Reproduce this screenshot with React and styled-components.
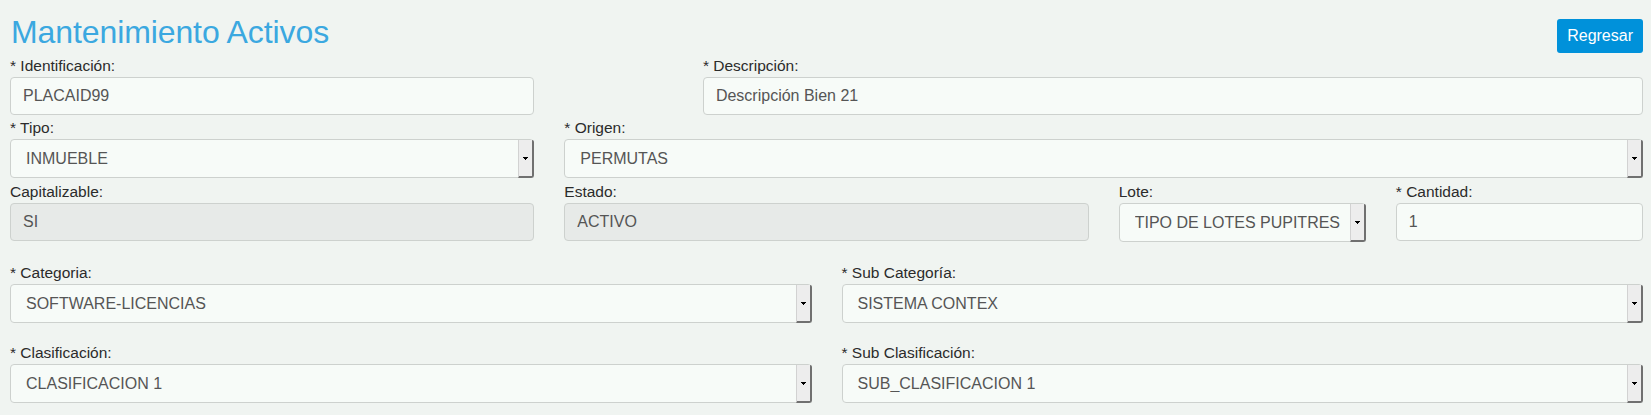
import React from 'react';
import styled, { createGlobalStyle } from 'styled-components';

const GlobalStyle = createGlobalStyle`
  * { box-sizing: border-box; }
  html, body {
    margin: 0;
    padding: 0;
    background: #f0f4f1;
  }
  body {
    font-family: 'Liberation Sans', Arial, sans-serif;
    color: #333;
  }
`;

const rows = [
  {
    gap: 0,
    fields: [
      { label: '* Identificación:', value: 'PLACAID99', span: 4 },
      { label: '* Descripción:', value: 'Descripción Bien 21', span: 7, start: 6 },
    ],
  },
  {
    gap: 4,
    fields: [
      { label: '* Tipo:', value: 'INMUEBLE', span: 4, select: true },
      { label: '* Origen:', value: 'PERMUTAS', span: 8, select: true },
    ],
  },
  {
    gap: 5,
    fields: [
      { label: 'Capitalizable:', value: 'SI', span: 4, muted: true },
      { label: 'Estado:', value: 'ACTIVO', span: 4, muted: true },
      { label: 'Lote:', value: 'TIPO DE LOTES PUPITRES', span: 2, select: true },
      { label: '* Cantidad:', value: '1', span: 2 },
    ],
  },
  {
    gap: 22,
    fields: [
      { label: '* Categoria:', value: 'SOFTWARE-LICENCIAS', span: 6, select: true },
      { label: '* Sub Categoría:', value: 'SISTEMA CONTEX', span: 6, select: true },
    ],
  },
  {
    gap: 21,
    fields: [
      { label: '* Clasificación:', value: 'CLASIFICACION 1', span: 6, select: true },
      { label: '* Sub Clasificación:', value: 'SUB_CLASIFICACION 1', span: 6, select: true },
    ],
  },
];

// flecha pequeña de los combos (5x3 px, pixel a pixel)
const Caret = () => (
  <svg width='5' height='3' viewBox='0 0 5 3' shapeRendering='crispEdges'>
    <rect x='0' y='0' width='5' height='1' fill='#000' />
    <rect x='1' y='1' width='3' height='1' fill='#000' />
    <rect x='2' y='2' width='1' height='1' fill='#000' />
  </svg>
);

export default function App() {
  return (
    <>
      <GlobalStyle />
      <Page>
        <Header>
          <Title>Mantenimiento Activos</Title>
          <BackButton type='button'>Regresar</BackButton>
        </Header>
        {rows.map((row, i) => (
          <FormRow key={i} $gap={row.gap}>
            {row.fields.map((f) => (
              <Field key={f.label} $span={f.span} $start={f.start}>
                <Label>{f.label}</Label>
                {f.select ? (
                  <SelectBox>
                    <SelectValue defaultValue={f.value}>
                      <option value={f.value}>{f.value}</option>
                    </SelectValue>
                    <ArrowBox>
                      <Caret />
                    </ArrowBox>
                  </SelectBox>
                ) : (
                  <TextInput readOnly defaultValue={f.value} $muted={f.muted} />
                )}
              </Field>
            ))}
          </FormRow>
        ))}
      </Page>
    </>
  );
}

const Page = styled.div`
  padding: 0 8px 12px 10px;
`;

const Header = styled.div`
  display: flex;
  justify-content: space-between;
  align-items: flex-start;
  height: 57px;
`;

const Title = styled.h1`
  margin: 16px 0 0 1px;
  font-family: 'Liberation Sans', Arial, sans-serif;
  font-weight: normal;
  font-size: 32px;
  line-height: 32px;
  letter-spacing: -0.1px;
  color: #3ba8e0;
`;

const BackButton = styled.button`
  margin-top: 19px;
  height: 34px;
  padding: 0 10px;
  border: none;
  border-radius: 3px;
  background: #0091da;
  color: #fff;
  font-family: 'Liberation Sans', Arial, sans-serif;
  font-size: 16px;
`;

const FormRow = styled.div`
  display: grid;
  grid-template-columns: repeat(12, 1fr);
  column-gap: 30px;
  margin-top: ${(p) => p.$gap}px;
`;

const Field = styled.div`
  grid-column: ${(p) => (p.$start ? `${p.$start} / span ${p.$span}` : `span ${p.$span}`)};
  display: flex;
  flex-direction: column;
  min-width: 0;
`;

const Label = styled.label`
  font-size: 15.5px;
  line-height: 18px;
  margin-bottom: 2px;
  color: #2b2b2b;
`;

const TextInput = styled.input`
  width: 100%;
  height: 38px;
  padding: 0 12px;
  border: 1px solid #cdd1ce;
  border-radius: 4px;
  background: ${(p) => (p.$muted ? '#e7eae8' : '#f7fbf8')};
  font-family: 'Liberation Sans', Arial, sans-serif;
  font-size: 16px;
  color: #555;
  outline: none;
`;

const SelectBox = styled.div`
  display: flex;
  height: 39px;
  border: 1px solid #cdd1ce;
  border-radius: 4px;
  background: #f7fbf8;
`;

const SelectValue = styled.select`
  flex: 1;
  min-width: 0;
  appearance: none;
  border: none;
  background: transparent;
  padding: 0 0 0 15px;
  font-family: 'Liberation Sans', Arial, sans-serif;
  font-size: 16px;
  color: #555;
  outline: none;
`;

const ArrowBox = styled.span`
  flex: 0 0 16px;
  display: flex;
  align-items: center;
  justify-content: center;
  margin: 0 -1px -1px 0;
  padding-top: 1px;
  background: #ededed;
  border-left: 1px solid #d2d2d2;
  border-right: 2px solid #707070;
  border-bottom: 2px solid #707070;
  border-radius: 0 2px 3px 0;
`;
